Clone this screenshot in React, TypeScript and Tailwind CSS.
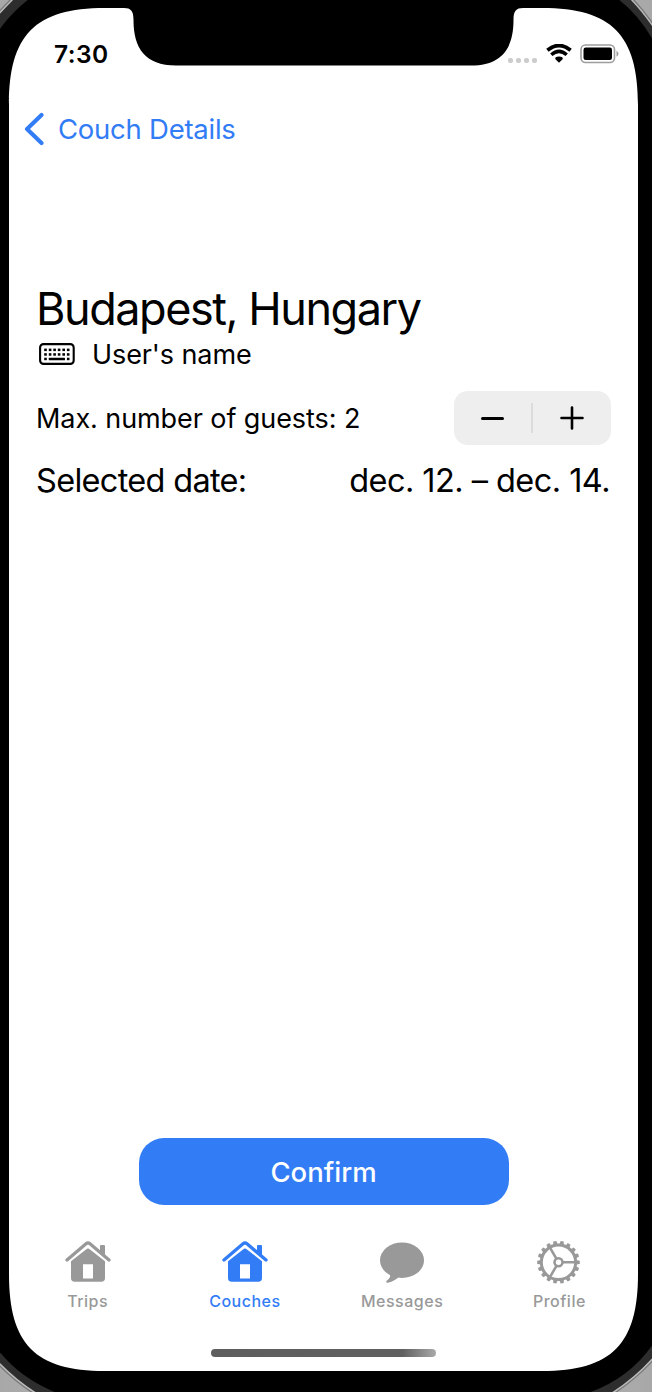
import React from "react";

const GEAR_TEETH = Array.from({ length: 18 }, (_, i) => i * 20 + 10);

function DeviceFrame() {
  return (
    <svg className="absolute inset-0 h-[1392px] w-[652px]" viewBox="0 0 652 1392" aria-hidden="true">
      <defs>
        <linearGradient id="metal" x1="0" y1="0" x2="1" y2="0">
          <stop offset="0" stopColor="#a8a8a8" />
          <stop offset="0.5" stopColor="#c4c4c4" />
          <stop offset="1" stopColor="#a8a8a8" />
        </linearGradient>
      </defs>
      <rect width="652" height="1392" fill="url(#metal)" />
      <path
        d="M-3 16 Q6 6 15 -3 H629 Q642 10 655 29 V1356 Q635 1379 609 1395 H39 Q17 1382 -3 1361 Z"
        fill="#2d2d2d"
        stroke="#777777"
        strokeWidth="4"
      />
      <path
        d="M-3 16 Q6 6 15 -3 H629 Q642 10 655 29 V1356 Q635 1379 609 1395 H39 Q17 1382 -3 1361 Z"
        fill="#2d2d2d"
        stroke="#b9b9b9"
        strokeWidth="1.500"
      />
      <path d="M-1 30 Q12 12 29 -1 H618 Q638 14 653 40 V1344 Q630 1378 588 1393 H57 Q20 1378 -1 1351 Z" fill="#000" />
      <path
        d="M9 105 C9 35 35 8 105 8 H124 C131 8 133.500 11 133.500 20 C133.500 48 145 65.500 176 65.500 H471 C502 65.500 513.500 48 513.500 20 C513.500 11 516 8 523 8 H542 C612 8 638 35 638 105 V1274 C638 1344 612 1371 542 1371 H105 C35 1371 9 1344 9 1274 Z"
        fill="#fff"
      />
    </svg>
  );
}

function WifiIcon() {
  return (
    <svg className="h-[19px] w-[26px]" viewBox="0 0 26 19" fill="none" stroke="#000" aria-hidden="true">
      <path d="M1.400 6.300 Q13 -3.300 24.600 6.300" strokeWidth="3.700" />
      <path d="M5.300 10.800 Q13 4 20.700 10.800" strokeWidth="3.500" />
      <path d="M13 18.700 L9.200 15 Q9.200 12.600 13 12.600 T16.800 15 Z" fill="#000" stroke="none" />
    </svg>
  );
}

function BatteryIcon() {
  return (
    <svg className="h-[20px] w-[40px]" viewBox="0 0 40 20" aria-hidden="true">
      <rect x="1" y="1" width="33.500" height="17.500" rx="4.500" fill="#fff" stroke="#9d9d9d" strokeWidth="1.600" />
      <rect x="3.500" y="3.500" width="28.500" height="12.500" rx="2.200" fill="#000" />
      <path d="M36.500 6.700 Q38.500 7.800 38.500 9.700 T36.500 12.700 Z" fill="#9d9d9d" />
    </svg>
  );
}

function KeyboardIcon() {
  return (
    <svg className="h-[22px] w-[36px]" viewBox="0 0 36 22" aria-hidden="true">
      <rect x="1.100" y="1.100" width="33.600" height="19.800" rx="3.400" fill="none" stroke="#000" strokeWidth="2.100" />
      {[5.600, 10.200].map((y) =>
        [5.200, 9.800, 14.300, 18.800, 23.400, 27.900].map((x) => (
          <rect key={`${x}-${y}`} x={x} y={y} width="2.600" height="2.500" fill="#000" />
        )),
      )}
      <rect x="5.200" y="14.700" width="2.600" height="2.500" fill="#000" />
      <rect x="9.800" y="14.700" width="16.200" height="2.500" rx="0.500" fill="#000" />
      <rect x="27.900" y="14.700" width="2.600" height="2.500" fill="#000" />
    </svg>
  );
}

function HouseIcon() {
  return (
    <svg className="h-[44px] w-[46px]" viewBox="0 0 46 44" fill="currentColor" aria-hidden="true">
      <path d="M35 14 V6 Q35 5 36 5 H39 Q40 5 40 6 V17 Z" />
      <path d="M2 20 L21 3.800 Q23 2.200 25 3.800 L44 20" fill="none" stroke="currentColor" strokeWidth="3.300" strokeLinecap="round" />
      <path
        fillRule="evenodd"
        d="M6 21.300 L22 8.800 Q23 8 24 8.800 L40 21.300 V38 Q40 41.800 36.200 41.800 H9.800 Q6 41.800 6 38 Z M18 24.200 V38.400 H28 V24.200 Z"
      />
    </svg>
  );
}

function MessageIcon() {
  return (
    <svg className="h-[44px] w-[46px]" viewBox="0 0 46 44" fill="currentColor" aria-hidden="true">
      <ellipse cx="23" cy="20.200" rx="22" ry="17.700" />
      <path d="M10 33 C12 36 11.500 37.500 8 40.600 C6.600 42 7 43 8.800 42.700 C13 42 16 39.800 19.500 37.500 Z" />
    </svg>
  );
}

function GearIcon() {
  return (
    <svg className="h-[44px] w-[46px]" viewBox="0 0 46 44" fill="none" stroke="currentColor" aria-hidden="true">
      <circle cx="22.500" cy="22.300" r="17.200" strokeWidth="3" />
      {GEAR_TEETH.map((angle) => (
        <path key={angle} d="M20.200 5 L20.900 1 H24.100 L24.800 5 Z" fill="currentColor" stroke="none" transform={`rotate(${angle} 22.500 22.300)`} />
      ))}
      <circle cx="22.500" cy="22.300" r="4" strokeWidth="2.600" />
      <path d="M26.500 22.300 H39.500 M20.500 18.800 L13.800 7.300 M20.500 25.800 L13.800 37.300" strokeWidth="2.600" />
    </svg>
  );
}

const tabs = [
  { label: "Trips", Icon: HouseIcon, color: "text-[#999999]" },
  { label: "Couches", Icon: HouseIcon, color: "text-[#327cf6]" },
  { label: "Messages", Icon: MessageIcon, color: "text-[#999999]" },
  { label: "Profile", Icon: GearIcon, color: "text-[#999999]" },
];

export default function App() {
  return (
    <div className="relative h-[1392px] w-[652px] overflow-hidden font-['Inter',sans-serif] text-black">
      <DeviceFrame />
      <div className="relative flex h-full flex-col pr-[14px] pl-[9px]">
        <header className="flex h-[96px] shrink-0 justify-between pt-[44px]">
          <time className="ml-[45px] h-5 text-[24.500px] leading-5 font-semibold tracking-[0.4px]">7:30</time>
          <div className="mr-[18px] flex h-5 items-start">
            <div className="mt-[14px] mr-[9px] flex gap-[3px]">
              {[0, 1, 2, 3].map((dot) => (
                <span key={dot} className="size-[5px] rounded-[2px] bg-[#cccccc]" />
              ))}
            </div>
            <WifiIcon />
            <div className="ml-[8px]">
              <BatteryIcon />
            </div>
          </div>
        </header>

        <nav className="flex h-[66px] shrink-0 items-center pl-[15px] text-[#327cf6]">
          <svg className="h-[34px] w-[20px]" viewBox="0 0 20 34" fill="none" aria-hidden="true">
            <path d="M17.500 3 L3 17 L17.500 31" stroke="currentColor" strokeWidth="4.100" strokeLinecap="round" strokeLinejoin="round" />
          </svg>
          <a className="ml-[14px] text-[27.500px] leading-8 tracking-[-0.25px] whitespace-nowrap">Couch Details</a>
        </nav>

        <main className="flex min-h-0 flex-1 flex-col pt-[122px] pr-[27px] pl-[27px]">
          <h1 className="text-[45px] leading-[50px] tracking-[-1.450px] whitespace-nowrap">Budapest, Hungary</h1>
          <div className="mt-[4px] flex h-[32px] items-center">
            <div className="ml-[3px]">
              <KeyboardIcon />
            </div>
            <span className="ml-[17px] pt-[2px] text-[27px] leading-8 tracking-[-0.1px] whitespace-nowrap">User's name</span>
          </div>
          <div className="mt-[21px] flex h-[54px] items-center justify-between">
            <span className="pt-[2px] text-[27px] leading-8 tracking-[-0.08px] whitespace-nowrap">Max. number of guests: 2</span>
            <div className="flex h-[54px] w-[157px] items-center rounded-[14px] bg-[#eeeeee]">
              <button className="flex h-full w-[77px] items-center justify-center" aria-label="Decrease">
                <span className="h-[3px] w-[23px] rounded-full bg-black" />
              </button>
              <span className="h-[30px] w-[2px] bg-[#dcdcdc]" />
              <button className="flex h-full flex-1 items-center justify-center" aria-label="Increase">
                <svg className="h-[24px] w-[24px]" viewBox="0 0 24 24" aria-hidden="true">
                  <path d="M1.500 12 H22.500 M12 1.500 V22.500" stroke="#000" strokeWidth="2.600" strokeLinecap="round" />
                </svg>
              </button>
            </div>
          </div>
          <div className="mt-[16px] flex h-[40px] items-center justify-between">
            <span className="text-[32.500px] leading-10 tracking-[-0.7px] whitespace-nowrap">Selected date:</span>
            <span className="mr-px text-[32.500px] leading-10 tracking-[-0.55px] whitespace-nowrap">dec. 12. – dec. 14.</span>
          </div>
          <button className="mt-auto h-[67px] w-[370px] self-center rounded-[25px] bg-[#327cf6] text-[27.500px] leading-8 font-medium text-white">
            Confirm
          </button>
        </main>

        <footer className="flex h-[187px] shrink-0 flex-col items-center">
          <div className="grid w-full grid-cols-4 pt-[35px]">
            {tabs.map(({ label, Icon, color }) => (
              <a key={label} className={`flex flex-col items-center ${color}`}>
                <Icon />
                <span className="mt-[7px] text-[16px] leading-5 font-medium tracking-[0.5px]">{label}</span>
              </a>
            ))}
          </div>
          <div className="mt-[38px] h-[8px] w-[225px] rounded-full bg-linear-to-r from-[#5e5e5e] via-[#606060] via-85% to-[#aaaaaa]" />
        </footer>
      </div>
    </div>
  );
}
